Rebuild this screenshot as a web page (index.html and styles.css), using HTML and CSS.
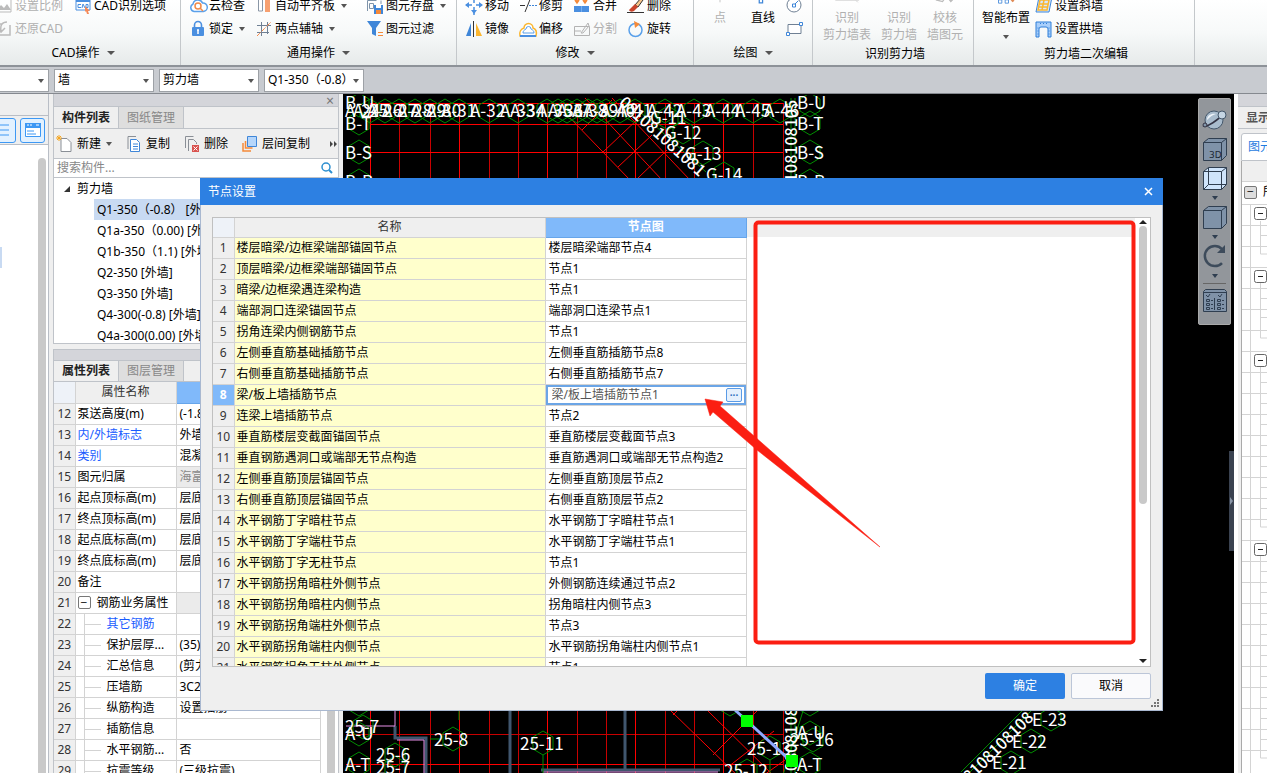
FILE: index.html
```html
<!DOCTYPE html>
<html lang="zh-CN">
<head>
<meta charset="utf-8">
<title>节点设置</title>
<link rel="stylesheet" href="styles.css">
</head>
<body>
<div class="app">
<header class="ribbon">
  <section class="group g-cad">
    <div class="cols">
      <div class="col"><button class="tool off"><svg class="ic" viewBox="0 0 18 18"><path d="M1 2h15v13H1z" fill="none" stroke="#bbb"/><path d="M2 13l4-5 3 3 3-4 4 6z" fill="#bbb"/></svg>设置比例</button><button class="tool off"><svg class="ic" viewBox="0 0 18 18"><path d="M1 4h6M1 15h14V5M12 2c-5 0-7 3-6 9M3 8l3 4 4-4" fill="none" stroke="#bbb" stroke-width="1.5"/></svg>还原CAD</button></div>
      <div class="col"><button class="tool"><svg class="ic" viewBox="0 0 18 18"><path d="M2 2h14v11H2z" fill="#fff" stroke="#4a8fe0"/><path d="M2 1h14v4H2z" fill="#4a8fe0"/><path d="M7 7.500H4v3h3M8 11l1-4 2 4M12 7.500h2v3h-2z" fill="none" stroke="#4a8fe0"/><path d="M11 9l5 5-2 0 1 3-2 0-1-3-1 1z" fill="#f58a5a"/></svg>CAD识别选项</button></div>
    </div>
    <button class="glabel">CAD操作<i class="tri"></i></button>
  </section>
  <section class="group g-common">
    <div class="cols">
      <div class="col w-cloud"><button class="tool"><svg class="ic" viewBox="0 0 18 18"><path d="M5 14.500a4 4 0 0 1-1-7.500a5 5 0 0 1 9.500-1a4 4 0 0 1 1 8.500z" fill="#fff" stroke="#5aa0ea" stroke-width="1.500"/><circle cx="9" cy="9" r="3" fill="none" stroke="#ef8a4a" stroke-width="1.500"/><path d="M11 11l3 3" stroke="#ef8a4a" stroke-width="1.500"/></svg>云检查</button><button class="tool"><svg class="ic" viewBox="0 0 18 18"><path d="M5.500 8V5a3.500 3.500 0 0 1 7 0v3" fill="none" stroke="#4a8fe0" stroke-width="1.600"/><rect x="3" y="7" width="12" height="9" rx="1" fill="#4a8fe0"/><path d="M9 10v4M8 10h2" stroke="#fff" stroke-width="1.500"/></svg>锁定<i class="tri"></i></button></div>
      <div class="col w-auto"><button class="tool"><svg class="ic" viewBox="0 0 18 18"><path d="M3.500 0v14h4V0" fill="#fff" stroke="#8a97a6"/><path d="M10 0h5v15h-5z" fill="#f7a070"/></svg>自动平齐板<i class="tri"></i></button><button class="tool"><svg class="ic" viewBox="0 0 18 18"><path d="M2 5.500h14M2 12.500h12M6.500 2v14M12.500 2v12" stroke="#6f8094"/><path d="M2 16L16 2" stroke="#f58a4a" stroke-dasharray="4 1 1 1"/></svg>两点辅轴<i class="tri"></i></button></div>
      <div class="col"><button class="tool"><svg class="ic" viewBox="0 0 18 18"><path d="M1.500 14V3.500h9M15 3.500V7M3.500 6.500h4v5h-4z" fill="none" stroke="#7f94aa"/><path d="M8 8h9v9H8z" fill="#3f86d8"/><path d="M10 8h5v3h-5z" fill="#fff"/><path d="M10 13h5v4h-5z" fill="#f58a3a"/></svg>图元存盘<i class="tri"></i></button><button class="tool"><svg class="ic" viewBox="0 0 18 18"><path d="M1 1h14l-5 7v8l-4-2V8z" fill="#3f86d8"/><path d="M12 12.500h5M12 15.500h5" stroke="#f58a3a"/></svg>图元过滤</button></div>
    </div>
    <button class="glabel">通用操作<i class="tri"></i></button>
  </section>
  <section class="group g-edit">
    <div class="cols">
      <div class="col"><button class="tool"><svg class="ic" viewBox="0 0 18 18"><path d="M9 0v6M9 10v8M1 8h6M11 8h6" stroke="#4a8fe0" stroke-width="1.500"/><path d="M9-1l3 4H6zM9 17l3-4H6zM0 8l4-3v6zM18 8l-4-3v6z" fill="#4a8fe0"/></svg>移动</button><button class="tool"><svg class="ic" viewBox="0 0 18 18"><path d="M6 3v13H1z" fill="#3f86d8"/><path d="M11 3v13h6z" fill="#fbb62f"/><path d="M8.500 1v16" stroke="#333"/></svg>镜像</button></div>
      <div class="col"><button class="tool"><svg class="ic" viewBox="0 0 18 18"><path d="M1 8.500h5M12 0L6 15" stroke="#333" fill="none"/><path d="M10 8.500h8" stroke="#3f86d8" stroke-dasharray="2 1"/></svg>修剪</button><button class="tool"><svg class="ic" viewBox="0 0 18 18"><path d="M5 8a4.500 4.500 0 1 1 9 0c3 1 4 4 3 8H1c-1-4 1-7 4-8z" fill="#fff" stroke="#fbb62f" stroke-width="1.500"/><path d="M7 9a2.500 2.500 0 1 1 5 0c2 1 3 2 3 4H4c0-2 1-3 3-4z" fill="none" stroke="#5aa0ea"/><path d="M1 16h16" stroke="#4a8fe0" stroke-width="2"/></svg>偏移</button></div>
      <div class="col"><button class="tool"><svg class="ic" viewBox="0 0 18 18"><path d="M1 9h15v6H1z" fill="#4a8fe0"/><path d="M8.500 9v6" stroke="#76adf0"/><path d="M4 0v5M12 0v5M2 3l2 3 2-3M10 3l2 3 2-3" stroke="#f58a3a" fill="none" stroke-width="1.500"/></svg>合并</button><button class="tool off"><svg class="ic" viewBox="0 0 18 18"><path d="M1.500 6.500h15v9h-15zM1 11h7M8 13l7-10 1 3-6 7z" fill="none" stroke="#b3b3b3"/></svg>分割</button></div>
      <div class="col"><button class="tool"><svg class="ic" viewBox="0 0 18 18"><path d="M8 8l6-7 2 2-5 7z" fill="#f7c58a" stroke="#333"/><path d="M4 11l4-4 3 3-4 4c-2 1-4 1-5-1z" fill="#c9442c"/><path d="M0 15.500h17" stroke="#333"/></svg>删除</button><button class="tool"><svg class="ic" viewBox="0 0 18 18"><circle cx="8.500" cy="10" r="6.500" fill="none" stroke="#5aa0ea" stroke-width="1.500"/><path d="M7 1l6 3-5 4z" fill="#f58a3a"/></svg>旋转</button></div>
    </div>
    <button class="glabel">修改<i class="tri"></i></button>
  </section>
  <section class="group g-draw">
    <div class="cols">
      <button class="big off"><svg class="ic" viewBox="0 0 18 18"><path d="M9 0v10" stroke="#bbb"/></svg><span>点</span><span></span></button>
      <button class="big"><svg class="ic" viewBox="0 0 18 18"><path d="M4.500 6.500h4v4h-4z" fill="#fff" stroke="#3f86d8" stroke-width="1.500"/></svg><span>直线</span><span></span></button>
      <div class="col"><button class="tool" aria-label="圆"><svg class="ic" viewBox="0 0 18 18"><circle cx="9" cy="8" r="7" fill="#fff" stroke="#6f8094"/><path d="M9 8l4-4" stroke="#3f86d8"/><path d="M7.500 7h3v3h-3z" fill="#fff" stroke="#3f86d8"/></svg></button><button class="tool" aria-label="矩形"><svg class="ic" viewBox="0 0 18 18"><path d="M3 4.500h13v9H3z" fill="#fff" stroke="#6f8094"/><path d="M1.500 12.500h3v3h-3zM14.500 2.500h3v3h-3z" fill="#fff" stroke="#3f86d8"/></svg></button></div>
    </div>
    <button class="glabel">绘图<i class="tri"></i></button>
  </section>
  <section class="group g-rec">
    <div class="cols">
      <button class="big off"><svg class="ic wide" viewBox="0 0 30 18"><path d="M1 7.500h28V0M26 8l2 2" fill="none" stroke="#ccc"/></svg><span>识别</span><span>剪力墙表</span></button>
      <button class="big off"><svg class="ic wide" viewBox="0 0 30 18"><path d="M1 5.500h19M24 6l5-2" fill="none" stroke="#ccc" stroke-width="2"/></svg><span>识别</span><span>剪力墙</span></button>
      <button class="big off"><svg class="ic wide" viewBox="0 0 30 18"><path d="M4 7l8 2 3-4M17 3l5 6 4-4" fill="none" stroke="#bbb" stroke-width="1.500"/></svg><span>校核</span><span>墙图元</span></button>
    </div>
    <p class="glabel low">识别剪力墙</p>
  </section>
  <section class="group g-second">
    <div class="cols">
      <button class="big"><svg class="ic wide" viewBox="0 0 30 18"><path d="M8 8l4-9M19 7l-4-8" stroke="#3f86d8" fill="none"/><path d="M6 7h4v4H6zM14 7h4v4h-4z" fill="#fff" stroke="#3f86d8"/><path d="M14-3l10 12" stroke="#e08a55" stroke-width="3"/></svg><span>智能布置</span><span><i class="tri"></i></span></button>
      <div class="col"><button class="tool"><svg class="ic" viewBox="0 0 18 18"><path d="M4 0h13l-3 15H1z" fill="#d5e8ff" stroke="#3f86d8"/><path d="M5 3h9l-2 10H3zM4 7h9M3.500 10h9M9 3L7 13" fill="none" stroke="#fbb62f" stroke-width="1.500"/></svg>设置斜墙</button><button class="tool"><svg class="ic" viewBox="0 0 18 18"><path d="M1 2h15v15h-3V9a2 2 0 0 0-2-2H6a2 2 0 0 0-2 2v8H1z" fill="#a9cffb" stroke="#2f7fd8"/><path d="M2.500 8h1M2.500 11h1M2.500 14h1M13.500 8h1M13.500 11h1M13.500 14h1M5 3.500h1M8 3.500h1M11 3.500h1" stroke="#2f7fd8"/></svg>设置拱墙</button></div>
    </div>
    <p class="glabel low">剪力墙二次编辑</p>
  </section>
</header>

<nav class="pickers" aria-label="构件选择">
  <label class="pick cut"><select aria-label="楼层"><option></option></select></label>
  <label class="pick"><select aria-label="构件大类"><option>墙</option></select></label>
  <label class="pick"><select aria-label="构件类型"><option>剪力墙</option></select></label>
  <label class="pick"><select aria-label="构件"><option>Q1-350（-0.8）</option></select></label>
</nav>

<main class="work">
  <aside class="leftnav">
    <div class="lefthead"></div>
    <div class="leftbtns">
      <button class="view half" aria-label="列表"><svg viewBox="0 0 18 18"><path d="M5 4h9M5 9h9M5 14h9" stroke="#3d98f4"/></svg></button>
      <button class="view" aria-label="卡片"><svg viewBox="0 0 18 18"><path d="M1.500 2.500h15v13h-15z" fill="#fff" stroke="#3d98f4"/><path d="M1 2h16v5H1z" fill="#3d98f4"/><path d="M3 10h7M3 13h9" stroke="#3d98f4"/><path d="M3 4h2M6 4h2M12 4h3" stroke="#fff"/></svg></button>
    </div>
    <div class="leftbody"><i class="leftsel"></i><i class="leftthumb"></i></div>
  </aside>

  <div class="panels">
    <section class="panel comp">
      <div class="strip"><button class="x" aria-label="关闭">×</button></div>
      <div class="tabs"><button class="tab on">构件列表</button><button class="tab">图纸管理</button></div>
      <div class="bar">
        <button><svg class="ic" viewBox="0 0 18 18"><path d="M5 3.500h6l4 4v9H5z" fill="#fff" stroke="#8a8f96"/><path d="M1 1l4 4M5 1L1 5M3 0v6M0 3h6" stroke="#f5a623"/></svg>新建<i class="tri"></i></button>
        <button><svg class="ic" viewBox="0 0 18 18"><path d="M3 14V1.500h8" fill="none" stroke="#8a8f96"/><path d="M5.500 4.500h6l3 3v9h-9z" fill="#fff" stroke="#3f86d8"/><path d="M8 9h5M8 11.500h5M8 14h5" stroke="#3f86d8"/></svg>复制</button>
        <button><svg class="ic" viewBox="0 0 18 18"><path d="M2.500 13V1.500h8M5.500 16V4.500h5l3 3V9" fill="none" stroke="#8a8f96"/><path d="M9 10h7v7H9z" fill="#d9534f"/><path d="M10.500 11.500l4 4M14.500 11.500l-4 4" stroke="#fff"/></svg>删除</button>
        <button><svg class="ic" viewBox="0 0 18 18"><path d="M2 8v8h8M4.500 6v7h7" fill="none" stroke="#f58a3a" stroke-width="1.500"/><path d="M6.500 1.500h9v10h-9z" fill="#b5d6fb" stroke="#3f86d8"/></svg>层间复制</button>
        <svg class="more" viewBox="0 0 8 8"><path d="M0 1l3 3-3 3zM4 1l3 3-3 3z" fill="#444"/></svg>
      </div>
      <div class="search"><input type="text" placeholder="搜索构件..." aria-label="搜索构件"><svg viewBox="0 0 12 12"><circle cx="5" cy="5" r="4" fill="none" stroke="#2d8fd0" stroke-width="1.500"/><path d="M8 8l3 3" stroke="#2d8fd0" stroke-width="2"/></svg></div>
      <ul class="tree">
        <li class="root"><svg viewBox="0 0 8 8"><path d="M7 1v6H1z" fill="#333"/></svg>剪力墙</li>
        <li class="sel">Q1-350（-0.8） [外墙]</li>
        <li>Q1a-350（0.00) [外墙]</li>
        <li>Q1b-350（1.1) [外墙]</li>
        <li>Q2-350 [外墙]</li>
        <li>Q3-350 [外墙]</li>
        <li>Q4-300(-0.8) [外墙]</li>
        <li>Q4a-300(0.00) [外墙]</li>
      </ul>
    </section>
    <section class="panel props">
      <div class="strip"></div>
      <div class="tabs"><button class="tab on">属性列表</button><button class="tab">图层管理</button></div>
      <div class="propwrap">
      <table class="grid proptable">
        <colgroup><col class="c-no"><col class="c-name"><col></colgroup>
        <thead><tr><th class="corner"></th><th>属性名称</th><th class="hot"></th></tr></thead>
        <tbody>
          <tr><th>12</th><td>泵送高度(m)</td><td>(-1.85)</td></tr>
          <tr><th>13</th><td class="blue">内/外墙标志</td><td>外墙</td></tr>
          <tr><th>14</th><td class="blue">类别</td><td>混凝土墙</td></tr>
          <tr><th>15</th><td>图元归属</td><td class="dim">海富</td></tr>
          <tr><th>16</th><td>起点顶标高(m)</td><td>层底标高</td></tr>
          <tr><th>17</th><td>终点顶标高(m)</td><td>层底标高</td></tr>
          <tr><th>18</th><td>起点底标高(m)</td><td>层底标高</td></tr>
          <tr><th>19</th><td>终点底标高(m)</td><td>层底标高</td></tr>
          <tr><th>20</th><td>备注</td><td></td></tr>
          <tr><th>21</th><td><button class="fold" aria-label="折叠">−</button>钢筋业务属性</td><td class="dim"></td></tr>
          <tr><th>22</th><td class="sub blue">其它钢筋</td><td></td></tr>
          <tr><th>23</th><td class="sub">保护层厚...</td><td>(35)</td></tr>
          <tr><th>24</th><td class="sub">汇总信息</td><td>(剪力墙)</td></tr>
          <tr><th>25</th><td class="sub">压墙筋</td><td>3C20</td></tr>
          <tr><th>26</th><td class="sub">纵筋构造</td><td>设置插筋</td></tr>
          <tr><th>27</th><td class="sub">插筋信息</td><td></td></tr>
          <tr><th>28</th><td class="sub">水平钢筋...</td><td>否</td></tr>
          <tr><th>29</th><td class="sub">抗震等级</td><td>(三级抗震)</td></tr>
        </tbody>
      </table>
      <i class="propthumb"></i>
      </div>
    </section>
  </div>

  <section class="canvas" aria-label="绘图区">
    <svg class="drawing">
      <defs><path id="h" d="M0-12L10-6V6L0 12L-10 6V-6z" fill="none" stroke="#008c00"/></defs>
      <g transform="translate(-343 -95)">
        <g shape-rendering="crispEdges">
        <path d="M399 103V180M430 103V180M489 103V180M518 103V180M577 103V180M606 103V180M665 103V180M694 103V180M753 103V180M783 103V180M399 711V773M430 711V773M489 711V773M518 711V773M577 711V773M606 711V773M665 711V773M694 711V773M753 711V773M783 711V773M346 734H783" stroke="#c80000" fill="none"/>
        <path d="M370 103V180M459 103V180M547 103V180M635 103V180M723 103V180M370 103H783M370 124H783M370 152H783M370 711V773M459 711V773M547 711V773M635 711V773M723 711V773M346 764H783" stroke="#ff0000" fill="none"/>
        </g>
        <path d="M570 118L630 180M585 98L662 180M612 98L690 180M582 130L612 100M603 152L640 117M618 167L652 135M637 179L667 150M671 711L742 780M708 711L778 780M673 715L677 711M713 755L757 711M728 767L774 731M757 780L785 760" stroke="#ff0000" fill="none"/>
        <path d="M510 711V773M625 711V771M541 770H720M395 726V738H426V773" stroke="#40566e" stroke-width="3" fill="none"/>
        <path d="M346 726H395V711M397 740H424V773M543 772H718" stroke="#e890e8" fill="none"/>
        <path d="M543 755V773M430 739H441M459 711V720M803 711L783 775M791 98V178M795 98V178M791 711V773M795 711V773M770 760V773M966 776L1031 711M961 772L1022 711M640 112L706 172" stroke="#008c00" fill="none"/>
        <use href="#h" x="359" y="105"/><use href="#h" x="359" y="123"/><use href="#h" x="359" y="152"/><use href="#h" x="359" y="181"/>
        <use href="#h" x="810" y="105"/><use href="#h" x="810" y="123"/><use href="#h" x="810" y="152"/><use href="#h" x="810" y="181"/>
        <use href="#h" x="370" y="111"/><use href="#h" x="385" y="111"/><use href="#h" x="399" y="111"/><use href="#h" x="415" y="111"/><use href="#h" x="430" y="111"/><use href="#h" x="445" y="111"/><use href="#h" x="459" y="111"/><use href="#h" x="489" y="111"/><use href="#h" x="518" y="111"/><use href="#h" x="547" y="111"/><use href="#h" x="558" y="111"/><use href="#h" x="567" y="111"/><use href="#h" x="577" y="111"/><use href="#h" x="588" y="111"/><use href="#h" x="597" y="111"/><use href="#h" x="606" y="111"/><use href="#h" x="620" y="111"/><use href="#h" x="635" y="111"/><use href="#h" x="665" y="111"/><use href="#h" x="694" y="111"/><use href="#h" x="723" y="111"/><use href="#h" x="753" y="111"/><use href="#h" x="780" y="111"/>
        <use href="#h" x="668" y="118"/><use href="#h" x="683" y="132"/><use href="#h" x="703" y="153"/><use href="#h" x="724" y="174"/>
        <use href="#h" x="363" y="727"/><use href="#h" x="359" y="734"/><use href="#h" x="359" y="764"/><use href="#h" x="395" y="755"/><use href="#h" x="395" y="768"/><use href="#h" x="453" y="739"/><use href="#h" x="543" y="743"/><use href="#h" x="730" y="704"/><use href="#h" x="747" y="771"/><use href="#h" x="770" y="748"/><use href="#h" x="810" y="733"/><use href="#h" x="813" y="740"/><use href="#h" x="810" y="764"/><use href="#h" x="810" y="704"/><use href="#h" x="359" y="704"/>
        <use href="#h" x="1051" y="719"/><use href="#h" x="1031" y="741"/><use href="#h" x="1011" y="763"/>
        <g class="cad">
          <text x="345" y="109">B-U</text><text x="345" y="130">B-T</text><text x="345" y="159">B-S</text><text x="345" y="188">B-R</text>
          <text x="797" y="109">B-U</text><text x="797" y="130">B-T</text><text x="797" y="159">B-S</text><text x="797" y="188">B-R</text>
          <text x="345" y="117">A-24</text><text x="353" y="117">A-25</text><text x="367" y="117">A-26</text><text x="382" y="117">A-27</text><text x="397" y="117">A-28</text><text x="411" y="117">A-29</text><text x="426" y="117">A-30</text><text x="441" y="117">A-31</text><text x="470" y="117">A-32</text><text x="500" y="117">A-33</text><text x="510" y="117">A-34</text><text x="537" y="117">A-35</text><text x="548" y="117">A-36</text><text x="557" y="117">A-37</text><text x="572" y="117">A-38</text><text x="583" y="117">A-39</text><text x="600" y="117">A-40</text><text x="617" y="117">A-41</text><text x="647" y="117">A-42</text><text x="676" y="117">A-43</text><text x="705" y="117">A-44</text><text x="735" y="117">A-45</text><text x="764" y="117">A-46</text>
          <text x="650" y="124">G-11</text><text x="665" y="139">G-12</text><text x="685" y="160">G-13</text><text x="706" y="181">G-14</text>
          <text x="345" y="733">25-7</text><text x="345" y="740">A-U</text><text x="345" y="771">A-T</text><text x="376" y="761">25-6</text><text x="376" y="774">25-7</text><text x="434" y="746">25-8</text><text x="520" y="750">25-11</text><text x="724" y="777">25-12</text><text x="747" y="755">25-13</text><text x="790" y="746">25-16</text><text x="797" y="739">A-U</text><text x="797" y="771">A-T</text>
          <text x="1032" y="726">E-23</text><text x="1012" y="748">E-22</text><text x="992" y="769">E-21</text>
          <g class="heavy">
            <text transform="translate(797 182) rotate(-90)">108108105</text>
            <text transform="translate(797 780) rotate(-90)">108081081</text>
            <text transform="translate(618 104) rotate(42)">081081081081</text>
            <text transform="translate(970 783) rotate(-45)">8108108108</text>
          </g>
        </g>
        <path d="M735 710L793 763" stroke="#8faaff" stroke-width="3"/>
        <path d="M741 715h12v12h-12zM786 755h12v12h-12z" fill="#00ff00"/>
      </g>
    </svg>
    <div class="viewbar">
      <button aria-label="动态观察"><svg viewBox="0 0 26 26"><circle cx="12" cy="13" r="9" fill="#a9bccd" stroke="#44576b"/><path d="M5 13c0-5 5-7 9-6-4 1-6 3-9 6z" fill="#eef4fa"/><path d="M1 19c3 2 16-6 22-14" fill="none" stroke="#334" stroke-width="1.500"/><circle cx="20" cy="8" r="4" fill="#c5d5e3" stroke="#44576b"/><circle cx="3" cy="18" r="2" fill="#8296aa" stroke="#334"/></svg></button>
      <button aria-label="三维"><svg viewBox="0 0 26 26"><path d="M1.500 6.500l5-4h18v17l-5 5h-18z" fill="#7f92a8" stroke="#2f3e50"/><path d="M1.500 6.500h18v18M19.500 6.500l5-4" fill="none" stroke="#2f3e50"/><text x="7" y="22" class="t3d">3D</text></svg></button>
      <button aria-label="线框"><svg viewBox="0 0 26 26"><path d="M1.500 6.500l5-4h18v17l-5 5h-18z" fill="#cfe4fb" stroke="#2f3e50"/><path d="M1.500 6.500h18v18M19.500 6.500l5-4M6.500 2.500v17h18M1.500 24.500l5-5" fill="none" stroke="#2f3e50"/></svg></button>
      <i class="tri"></i>
      <button aria-label="视图"><svg viewBox="0 0 26 26"><path d="M1.500 6.500l5-4h18v17l-5 5h-18z" fill="#7f92a8" stroke="#2f3e50"/><path d="M1.500 6.500h18v18M19.500 6.500l5-4" fill="none" stroke="#2f3e50"/></svg></button>
      <i class="tri"></i>
      <button aria-label="旋转视图"><svg viewBox="0 0 26 26"><path d="M20 20a10 10 0 1 1 0-14" fill="none" stroke="#3d4b5b" stroke-width="2.500"/><path d="M23 2v8h-8z" fill="#3d4b5b"/></svg></button>
      <i class="tri"></i>
      <hr>
      <button aria-label="显示设置"><svg viewBox="0 0 26 26"><path d="M1.500 4.500l2-2h19l2 2v20h-23z" fill="#7f92a8" stroke="#2f3e50"/><path d="M1 5.500h23M12.500 11v12M4 8l2 2 2-3M16 8l2 2 2-3" fill="none" stroke="#2f3e50"/><path d="M4.500 12.500h3v2h-3zM4.500 16.500h3v2h-3zM4.500 20.500h3v2h-3zM15.500 12.500h3v2h-3zM15.500 16.500h3v2h-3zM15.500 20.500h3v2h-3zM9 13.500h2M9 17.500h2M9 21.500h2M20 13.500h2M20 17.500h2M20 21.500h2" fill="none" stroke="#2f3e50"/></svg></button>
    </div>
    <svg class="splitter" viewBox="0 0 5 100"><path d="M0 0h5v100H0z" fill="#3a4250"/><path d="M1 46l3 4-3 4z" fill="#8b97a8"/></svg>
  </section>

  <aside class="rightpane">
    <div class="strip"></div>
    <div class="tabs"><button class="tab on">显示设置</button></div>
    <div class="subtabs"><button>图元显示</button></div>
    <div class="righttree">
      <div class="rhead"></div>
      <div class="r0"><button class="fold gray" aria-label="折叠">−</button>所有构件</div>
      <svg class="lines">
        <path d="M0 43.500h28M0 64.500h28M0 85.500h28M0 106.500h28M0 127.500h28M0 148.500h28M0 169.500h28M0 190.500h28M0 211.500h28M0 232.500h28M0 253.500h28M0 274.500h28M0 295.500h28M0 316.500h28M0 337.500h28M0 358.500h28M0 379.500h28M0 400.500h28M0 421.500h28M0 442.500h28M0 463.500h28M0 484.500h28M0 505.500h28M0 526.500h28M0 547.500h28M0 568.500h28M0 589.500h28M8.500 43v570M18.500 60v33h10M18.500 74.500h10M18.500 122v55h10M18.500 137.500h10M18.500 156.500h10M18.500 206v160h10M18.500 221.500h10M18.500 242.500h10M18.500 263.500h10M18.500 284.500h10M18.500 305.500h10M18.500 326.500h10M18.500 347.500h10M18.500 395v202h10M18.500 410.500h10M18.500 431.500h10M18.500 452.500h10M18.500 473.500h10M18.500 494.500h10M18.500 515.500h10M18.500 536.500h10M18.500 557.500h10M18.500 578.500h10" fill="none" stroke="#d4d4d4"/>
        <g fill="#fff" stroke="#666"><rect x="12.500" y="46.500" width="12" height="12" rx="2"/><rect x="12.500" y="109.500" width="12" height="12" rx="2"/><rect x="12.500" y="193.500" width="12" height="12" rx="2"/><rect x="12.500" y="382.500" width="12" height="12" rx="2"/></g>
        <path d="M16 52.500h5M16 115.500h5M16 199.500h5M16 388.500h5" stroke="#222"/>
      </svg>
    </div>
  </aside>
</main>

<div class="dialog" role="dialog" aria-label="节点设置">
  <div class="title"><span>节点设置</span><button aria-label="关闭"><svg viewBox="0 0 10 10"><path d="M1 1l7 7M8 1L1 8" stroke="#fff" stroke-width="1.500"/></svg></button></div>
  <div class="frame">
    <table class="grid nodes">
      <colgroup><col class="c-no"><col class="c-node"><col class="c-fig"></colgroup>
      <thead><tr><th class="corner"></th><th>名称</th><th class="hot">节点图</th></tr></thead>
      <tbody>
        <tr><th>1</th><td>楼层暗梁/边框梁端部锚固节点</td><td>楼层暗梁端部节点4</td></tr>
        <tr><th>2</th><td>顶层暗梁/边框梁端部锚固节点</td><td>节点1</td></tr>
        <tr><th>3</th><td>暗梁/边框梁遇连梁构造</td><td>节点1</td></tr>
        <tr><th>4</th><td>端部洞口连梁锚固节点</td><td>端部洞口连梁节点1</td></tr>
        <tr><th>5</th><td>拐角连梁内侧钢筋节点</td><td>节点1</td></tr>
        <tr><th>6</th><td>左侧垂直筋基础插筋节点</td><td>左侧垂直筋插筋节点8</td></tr>
        <tr><th>7</th><td>右侧垂直筋基础插筋节点</td><td>右侧垂直筋插筋节点7</td></tr>
        <tr class="cur"><th>8</th><td>梁/板上墙插筋节点</td><td><div class="edit"><input type="text" value="梁/板上墙插筋节点1" aria-label="节点图"><button aria-label="选择节点">···</button></div></td></tr>
        <tr><th>9</th><td>连梁上墙插筋节点</td><td>节点2</td></tr>
        <tr><th>10</th><td>垂直筋楼层变截面锚固节点</td><td>垂直筋楼层变截面节点3</td></tr>
        <tr><th>11</th><td>垂直钢筋遇洞口或端部无节点构造</td><td>垂直筋遇洞口或端部无节点构造2</td></tr>
        <tr><th>12</th><td>左侧垂直筋顶层锚固节点</td><td>左侧垂直筋顶层节点2</td></tr>
        <tr><th>13</th><td>右侧垂直筋顶层锚固节点</td><td>右侧垂直筋顶层节点2</td></tr>
        <tr><th>14</th><td>水平钢筋丁字暗柱节点</td><td>水平钢筋丁字暗柱节点1</td></tr>
        <tr><th>15</th><td>水平钢筋丁字端柱节点</td><td>水平钢筋丁字端柱节点1</td></tr>
        <tr><th>16</th><td>水平钢筋丁字无柱节点</td><td>节点1</td></tr>
        <tr><th>17</th><td>水平钢筋拐角暗柱外侧节点</td><td>外侧钢筋连续通过节点2</td></tr>
        <tr><th>18</th><td>水平钢筋拐角暗柱内侧节点</td><td>拐角暗柱内侧节点3</td></tr>
        <tr><th>19</th><td>水平钢筋拐角端柱外侧节点</td><td>节点3</td></tr>
        <tr><th>20</th><td>水平钢筋拐角端柱内侧节点</td><td>水平钢筋拐角端柱内侧节点1</td></tr>
        <tr><th>21</th><td>水平钢筋拐角无柱外侧节点</td><td>节点1</td></tr>
      </tbody>
    </table>
    <div class="preview"></div>
    <div class="scroll"><i class="up"></i><i class="thumb"></i><i class="down"></i></div>
  </div>
  <div class="foot"><button class="ok">确定</button><button class="cancel">取消</button></div>
  <svg class="grip" viewBox="0 0 9 9"><path d="M6 0h2v2H6zM3 3h2v2H3zM6 3h2v2H6zM0 6h2v2H0zM3 6h2v2H3zM6 6h2v2H6z" fill="#777"/></svg>
  <svg class="mark" viewBox="0 0 963 533"><rect x="555.500" y="44.500" width="378" height="420" rx="3" fill="none" stroke="#fb1e12" stroke-width="4"/><path d="M505 221L523 224L520 228L680 369L557 272L513 234L510 238z" fill="#fb1e12" stroke="#fb1e12" stroke-width="0.500"/></svg>
</div>
</div>
</body>
</html>
```

FILE: styles.css
```css
* { box-sizing: border-box; }
body { margin: 0; overflow: hidden; font: 12px/20px "Noto Sans", "Noto Sans CJK SC", sans-serif; color: #000; }
button, input, select { font: inherit; color: inherit; }
button { border: 0; padding: 0; background: none; white-space: nowrap; }
p, ul { margin: 0; padding: 0; list-style: none; }
.app { height: 100vh; display: flex; flex-direction: column; background: #efefef; position: relative; }
.ic { width: 18px; height: 18px; flex: none; overflow: visible; }
.ic.wide { width: 30px; }
.tri { flex: none; width: 0; height: 0; border: 3px solid transparent; border-top: 4px solid #555; border-bottom: 0; display: inline-block; }

.ribbon { flex: none; height: 67px; display: flex; align-items: flex-end; overflow: hidden; background: linear-gradient(#fff, #f7f9f9 50%, #e6eaea); border-bottom: 2px solid #8d9298; }
.group { flex: none; display: flex; flex-direction: column; border-right: 1px solid #c4c8cb; }
.cols { display: flex; height: 46px; }
.col { display: flex; flex-direction: column; }
.tool { display: flex; align-items: center; gap: 2px; height: 23px; }
.tool .tri { margin-left: 4px; }
.off { color: #b0b0b0; }
.glabel { height: 25px; display: flex; align-items: center; justify-content: center; gap: 7px; }
.glabel .tri { border-width: 4px 4px 0; }
.glabel.low { padding: 3px 0 0 4px; }
.big { display: flex; flex-direction: column; align-items: center; line-height: 17px; }
.big span { height: 17px; }
.big .ic { height: 15px; }
.g-cad { width: 181px; }
.g-cad .cols { gap: 11px; margin-left: -5px; }
.g-cad .glabel { padding-right: 14px; }
.g-common { width: 276px; }
.g-common .cols { padding-left: 8px; }
.w-cloud { width: 66px; }
.w-auto { width: 111px; }
.g-edit { width: 237px; }
.g-edit .cols { padding-left: 8px; gap: 10px; }
.g-draw { width: 119px; }
.g-draw .cols { padding-left: 17px; gap: 22px; }
.g-draw .col { margin-left: -12px; }
.g-rec { width: 161px; }
.g-rec .cols { padding-left: 10px; gap: 10px; }
.g-second { width: 221px; }
.g-second .cols { padding-left: 8px; gap: 5px; }

.pickers { flex: none; height: 27px; display: flex; gap: 5px; align-items: center; background: #c8cbd0; border-bottom: 1px solid #85898f; }
.pick { width: 100px; height: 23px; position: relative; border: 1px solid #9da1a6; background: #fff; }
.pick.cut { width: 49px; border-left: 0; }
.pick select { width: 100%; height: 100%; border: 0; padding: 0 3px; appearance: none; background: none; display: block; white-space: nowrap; }
.pick::after { content: ""; position: absolute; right: 4px; top: 9px; border: 3px solid transparent; border-top: 4px solid #555; border-bottom: 0; }

.work { flex: 1; min-height: 0; display: flex; background: #efefef; }
.leftnav { flex: none; width: 49px; display: flex; flex-direction: column; border-right: 1px solid #b9bec6; overflow: hidden; }
.lefthead { height: 22px; border-bottom: 1px solid #b9bec6; }
.leftbtns { height: 29px; display: flex; gap: 4px; align-items: center; margin-left: -9px; border-bottom: 1px solid #b9bec6; }
.view { flex: none; width: 25px; height: 25px; border: 1px solid #3d98f4; border-radius: 3px; background: #e2f1ff; display: grid; place-items: center; }
.view svg { width: 18px; height: 18px; }
.leftbody { flex: 1; background: #fff; display: flex; justify-content: space-between; padding: 13px 2px 0 0; }
.leftsel { width: 2px; height: 21px; margin-top: 89px; background: #c8daf2; }
.leftthumb { width: 8px; border-radius: 4px 4px 0 0; background: #c9c9c9; }

.panels { flex: none; width: 290px; margin-left: 4px; display: flex; flex-direction: column; gap: 5px; }
.panel { width: 286px; border: 1px solid #bfc3c9; border-top: 0; display: flex; flex-direction: column; }
.strip { flex: none; height: 13px; background: #d4d5da; border-bottom: 1px solid #bfc3c9; display: flex; justify-content: flex-end; }
.x { width: 16px; line-height: 14px; font-size: 14px; color: #777; }
.tabs { flex: none; height: 22px; display: flex; border-bottom: 1px solid #bfc3c9; }
.tab { width: 65px; border-right: 1px solid #bfc3c9; background: #dedede; color: #888; }
.tab.on { background: #efefef; color: #222; font-weight: 600; }
.bar { height: 30px; display: flex; align-items: center; gap: 13px; padding: 0 0 0 2px; border-bottom: 1px solid #bfc3c9; }
.bar button { display: flex; align-items: center; gap: 3px; }
.bar .tri { margin-left: 2px; }
.more { width: 8px; height: 8px; margin-left: auto; flex: none; }
.search { height: 19px; display: flex; align-items: center; background: #fff; border-bottom: 1px solid #bfc3c9; padding-right: 5px; }
.search input { flex: 1; border: 0; padding: 0 3px; height: 18px; outline: 0; background: none; }
.search input::placeholder { color: #888; opacity: 1; }
.search svg { width: 12px; height: 12px; }
.comp { flex: none; height: 250px; overflow: hidden; }
.tree { background: #fff; flex: 1; overflow: hidden; }
.tree li { height: 21px; line-height: 21px; margin-left: 40px; padding-left: 3px; white-space: pre; }
.tree .root { margin-left: 8px; display: flex; align-items: center; gap: 6px; padding-left: 1px; }
.tree .root svg { width: 8px; height: 8px; }
.tree .sel { background: #c8daf2; }
.props { flex: 1; min-height: 0; border-bottom: 0; overflow: hidden; border-top: 1px solid #bfc3c9; }
.props .strip { height: 11px; }
.props .tabs { height: 21px; }
.propwrap { display: flex; justify-content: space-between; background: #fff; padding-right: 3px; }
.propthumb { width: 8px; background: #c9c9c9; margin-top: 21px; }

.grid { border-collapse: collapse; table-layout: fixed; line-height: 20px; }
.grid td, .grid th { height: 21px; padding: 0 0 0 2px; border: 1px solid #d3d3d3; border-width: 0 1px 1px 0; white-space: nowrap; overflow: hidden; font-weight: 400; text-align: left; }
.grid th { background: #efefef; color: #333; text-align: center; padding: 0; }
.grid .corner { background: #eef2f8; }
.grid .hot { background: #80b9fa; border-color: #66a5ea; color: #fff; font-weight: 600; }
.c-no { width: 21px; }
.proptable { width: 267px; }
.proptable .c-name { width: 101px; }
.proptable td:last-child { padding-left: 3px; }
.proptable .blue { color: #1a5cff; }
.proptable .dim { background: #ebebeb; color: #888; }
.grid .sub { background: linear-gradient(#d3d3d3, #d3d3d3) 8px 0 / 1px 100% no-repeat, linear-gradient(#d3d3d3, #d3d3d3) 8px 10px / 17px 1px no-repeat; padding-left: 31px; }
.fold { width: 13px; height: 13px; line-height: 10px; border: 1px solid #777; border-radius: 2px; margin-right: 6px; background: #fff; color: #222; }
.fold.gray { background: #ddd; }

.canvas { flex: 1; min-width: 0; position: relative; background: #000; overflow: hidden; border-top: 1px solid #000; }
.drawing { display: block; width: 100%; height: 100%; }
.cad { font: 17px "Noto Sans CJK SC", sans-serif; fill: #fff; }
.heavy { font-size: 16px; font-weight: 500; }
.viewbar { position: absolute; right: 3px; top: 3px; width: 33px; height: 227px; background: #92969b; border: 1px solid #aaa; border-radius: 2px; display: flex; flex-direction: column; align-items: center; padding-top: 8px; gap: 3px; }
.viewbar button { width: 26px; height: 26px; }
.viewbar svg { width: 26px; height: 26px; display: block; }
.viewbar .tri { margin: 2px 0 1px; border-top-color: #2f3e50; }
.viewbar hr { width: 23px; height: 1px; border: 0; background: #666; margin: 1px 0 0; flex: none; }
.t3d { font: 9px "DejaVu Sans", sans-serif; fill: #1c2836; }
.splitter { position: absolute; right: 0; top: 356px; width: 5px; height: 100px; }

.rightpane { flex: none; width: 33px; overflow: hidden; border-left: 4px solid #fff; display: flex; flex-direction: column; }
.rightpane .tab { padding-left: 8px; text-align: left; color: #555; flex: none; }
.subtabs { flex: none; height: 32px; padding: 4px 0 0 3px; }
.subtabs button { height: 28px; width: 70px; text-align: left; padding-left: 6px; background: #fff; border: 1px solid #bfc3c9; border-radius: 3px 3px 0 0; color: #1f7be0; }
.righttree { flex: 1; min-height: 0; overflow: hidden; margin-left: 3px; background: #fff; border-left: 1px solid #aaa; position: relative; }
.rhead { height: 21px; background: #efefef; border-bottom: 1px solid #d3d3d3; }
.r0 { height: 22px; padding-left: 2px; white-space: nowrap; }
.lines { position: absolute; left: 0; top: 0; width: 28px; height: 100%; }

.dialog { position: absolute; left: 200px; top: 178px; width: 963px; height: 533px; background: #efefef; border: 1px solid #a9b8d0; display: flex; flex-direction: column; }
.title { flex: none; height: 27px; margin: -1px -1px 0; padding: 0 9px 0 8px; background: #2d80e2; color: #fff; display: flex; align-items: center; justify-content: space-between; }
.title svg { width: 10px; height: 10px; display: block; }
.frame { flex: 1; min-height: 0; margin: 12px 11px 0; border: 1px solid #c0c0c0; background: #fff; display: flex; overflow: hidden; }
.nodes { width: 534px; flex: none; align-self: flex-start; }
.c-node { width: 311px; }
.nodes thead th { height: 19px; line-height: 18px; }
.nodes td:nth-child(2) { background: #ffffcc; }
.nodes .cur th { background: #80b9fa; color: #fff; font-weight: 700; }
.nodes .cur td:last-child { padding: 0; }
.nodes td:last-child { padding-left: 3px; }
.edit { height: 20px; border: 2px solid #6ba5e6; display: flex; align-items: center; padding-right: 2px; }
.edit input { flex: 1; min-width: 0; height: 16px; border: 0; padding: 0 4px; outline: 0; color: #555; background: none; }
.edit button { width: 16px; height: 14px; line-height: 10px; border: 1px solid #5a9be6; border-radius: 2px; background: #e6f1fd; color: #2d6fc0; font-weight: 700; font-size: 10px; }
.preview { flex: 1; background: linear-gradient(#efefef, #efefef) 0 0 / 100% 19px no-repeat; }
.scroll { width: 15px; display: flex; flex-direction: column; align-items: center; padding: 2px 0 3px; }
.up { border: 4px solid transparent; border-bottom: 4px solid #222; border-top: 0; }
.down { border: 4px solid transparent; border-top: 4px solid #222; border-bottom: 0; margin-top: auto; }
.thumb { width: 8px; height: 278px; margin-top: 2px; border-radius: 4px; background: #c9c9c9; }
.foot { flex: none; height: 43px; padding: 6px 11px 0; display: flex; justify-content: flex-end; gap: 6px; }
.foot button { width: 80px; height: 26px; border-radius: 2px; }
.ok { background: #2d80e2; color: #fff; }
.foot .cancel { border: 1px solid #bcc6d8; background: #fafafc; }
.grip { position: absolute; right: 2px; bottom: 2px; width: 9px; height: 9px; }
.mark { position: absolute; left: -1px; top: -1px; width: 963px; height: 533px; pointer-events: none; }
```
